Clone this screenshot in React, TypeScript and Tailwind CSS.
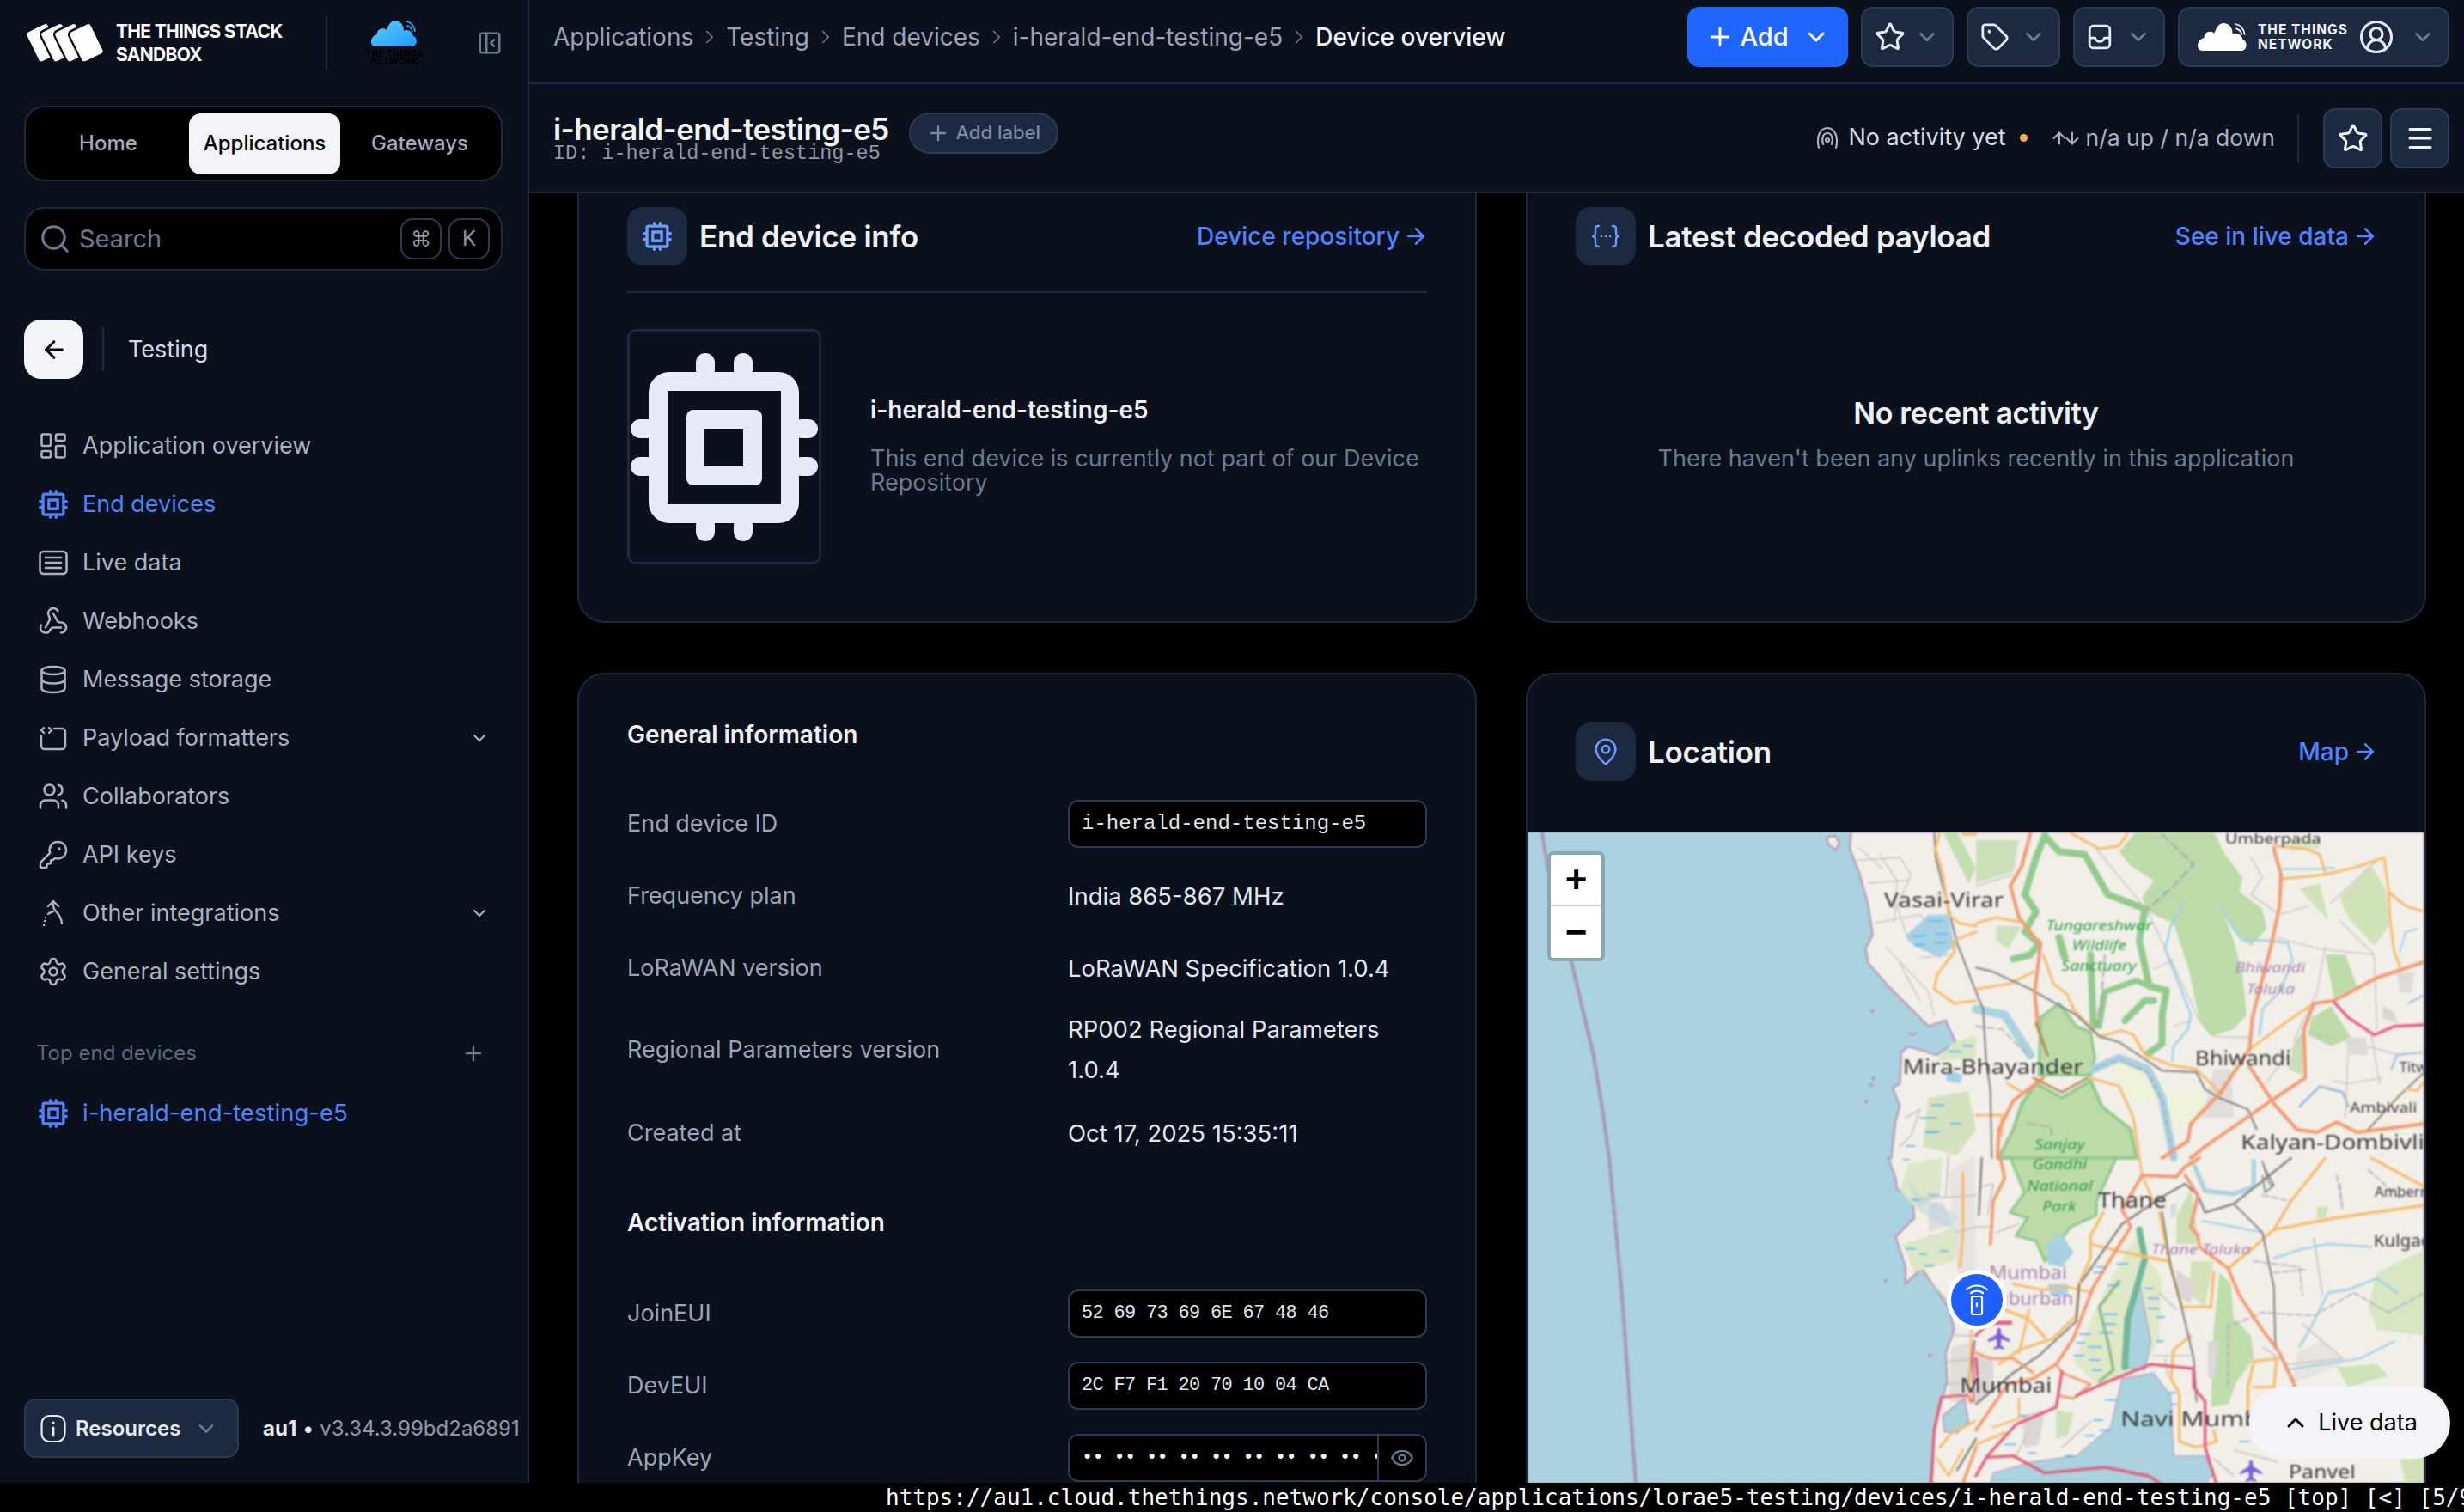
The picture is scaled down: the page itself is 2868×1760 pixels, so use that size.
import {
  ArrowLeft,
  ArrowRight,
  ChevronDown,
  ChevronRight,
  ChevronUp,
  CircleUserRound,
  Database,
  Eye,
  KeyRound,
  LayoutDashboard,
  MapPin,
  Menu,
  PanelLeftClose,
  Plus,
  Search,
  Settings,
  Star,
  Tag,
  Users,
  Webhook,
  ArrowUp,
  ArrowDown,
} from "lucide-react";
import type { ReactNode } from "react";

function Chip({ className }: { className?: string }) {
  return (
    <svg viewBox="0 0 218 219" className={className} fill="currentColor">
      <path
        fillRule="evenodd"
        d="M45 22h127a24 24 0 0 1 24 24v128a24 24 0 0 1-24 24H45a24 24 0 0 1-24-24V46a24 24 0 0 1 24-24ZM43 44v132h132V44ZM73 66h72a8 8 0 0 1 8 8v72a8 8 0 0 1-8 8H73a8 8 0 0 1-8-8V74a8 8 0 0 1 8-8ZM86 88v44h45V88Z"
      />
      <rect x="76" y="0" width="22" height="30" rx="11" />
      <rect x="120" y="0" width="22" height="30" rx="11" />
      <rect x="76" y="190" width="22" height="29" rx="11" />
      <rect x="120" y="190" width="22" height="29" rx="11" />
      <rect x="0" y="77" width="30" height="22" rx="11" />
      <rect x="0" y="121" width="30" height="22" rx="11" />
      <rect x="188" y="77" width="30" height="22" rx="11" />
      <rect x="188" y="121" width="30" height="22" rx="11" />
    </svg>
  );
}

function LiveIcon({ className }: { className?: string }) {
  return (
    <svg viewBox="0 0 34 34" className={className} fill="none" stroke="currentColor" strokeWidth="2.6" strokeLinecap="round">
      <rect x="1.5" y="4" width="31" height="26" rx="4" />
      <path d="M8 11h18M8 17h18M8 23h18" />
    </svg>
  );
}

function PayloadIcon({ className }: { className?: string }) {
  return (
    <svg viewBox="0 0 34 34" className={className} fill="none" stroke="currentColor" strokeWidth="2.4" strokeLinecap="round" strokeLinejoin="round">
      <path d="M3 15v11a4 4 0 0 0 4 4h20a4 4 0 0 0 4-4V10a4 4 0 0 0-4-4h-9" />
      <path d="M6 5 3 8l3 3M12 5l3 3-3 3" />
    </svg>
  );
}

function IntegrationsIcon({ className }: { className?: string }) {
  return (
    <svg viewBox="0 0 34 34" className={className} fill="none" stroke="currentColor" strokeWidth="2.4" strokeLinecap="round" strokeLinejoin="round">
      <path d="M11 9l6-6 6 6" />
      <path d="M17 3v5c0 8 9 8 10 21" />
      <path d="M17 15c-3 1-5 2-6 3" />
      <path d="M6 31h.1M7 26h.1M8 22h.1" />
    </svg>
  );
}

function ActivityIcon({ className }: { className?: string }) {
  return (
    <svg viewBox="0 0 28 30" className={className} fill="none" stroke="currentColor" strokeWidth="2.2" strokeLinecap="round">
      <path d="M4 26C1 14 5 3 14 3s13 11 10 23" />
      <path d="M9 22c-2-7 0-13 5-13s7 6 5 13" />
      <circle cx="14" cy="17" r="2" />
    </svg>
  );
}

function InfoIcon({ className }: { className?: string }) {
  return (
    <svg viewBox="0 0 30 34" className={className} fill="none" stroke="currentColor" strokeWidth="2.2" strokeLinecap="round">
      <rect x="1.5" y="2" width="27" height="30" rx="9" />
      <path d="M15 16v9" strokeWidth="2.8" />
      <path d="M15 10h.1" strokeWidth="3.2" />
    </svg>
  );
}

function TrayIcon({ className }: { className?: string }) {
  return (
    <svg viewBox="0 0 28 28" className={className} fill="none" stroke="currentColor" strokeWidth="2.6" strokeLinecap="round" strokeLinejoin="round">
      <rect x="3" y="2" width="22" height="24" rx="4" />
      <path d="M3 15h6c1 3 3 4 5 4s4-1 5-4h6" />
    </svg>
  );
}

function BracesIcon({ className }: { className?: string }) {
  return (
    <svg viewBox="0 0 34 34" className={className} fill="none" stroke="currentColor" strokeWidth="2.4" strokeLinecap="round" strokeLinejoin="round">
      <path d="M9 5H8a3 3 0 0 0-3 3v5c0 2-1 4-3 4 2 0 3 2 3 4v5a3 3 0 0 0 3 3h1" />
      <path d="M25 5h1a3 3 0 0 1 3 3v5c0 2 1 4 3 4-2 0-3 2-3 4v5a3 3 0 0 1-3 3h-1" />
      <path d="M12 17h.1M17 17h.1M22 17h.1" />
    </svg>
  );
}

function Cloud({ className, id, stops }: { className?: string; id?: string; stops?: [string, string] }) {
  return (
    <svg viewBox="0 0 58 30" className={className} fill={stops ? `url(#${id})` : "currentColor"}>
      {stops && (
        <defs>
          <linearGradient id={id} x1="0" y1="0" x2="1" y2="1">
            <stop offset="0" stopColor={stops[0]} />
            <stop offset="1" stopColor={stops[1]} />
          </linearGradient>
        </defs>
      )}
      <path d="M6 36a6 6 0 0 1 0-1ZM7 36C0 36 0 24 9 22c-1-6 7-9 11-5 2-6 5-11 10-11 6 0 10 5 10 12 2-2 10-1 11 6 5 1 6 12-2 12Z" transform="translate(0 -6)" />
      <path d="M43 1c5 1 9 5 10 11M44 6c3 1 5 3 6 6" fill="none" stroke={stops ? "#33b1ff" : "currentColor"} strokeWidth="1.6" strokeLinecap="round" />
    </svg>
  );
}

function Logo() {
  return (
    <svg viewBox="0 0 93 46" className="w-[93px] h-[46px] shrink-0" fill="#ffffff" stroke="#0a101c" strokeWidth="2.4">
      <rect x="8" y="3" width="29" height="40" rx="4.5" transform="rotate(-26 22 23)" />
      <rect x="25" y="3" width="29" height="40" rx="4.5" transform="rotate(-26 39 23)" />
      <rect x="41" y="3" width="29" height="40" rx="4.5" transform="rotate(-26 55 23)" />
      <rect x="58" y="3" width="29" height="40" rx="4.5" transform="rotate(-26 72 23)" />
    </svg>
  );
}

const navItems = [
  { label: "Application overview", icon: <LayoutDashboard className="w-[36px] h-[36px] -mx-[1px]" strokeWidth={1.7} /> },
  { label: "End devices", icon: <Chip className="w-[34px] h-[34px]" />, active: true },
  { label: "Live data", icon: <LiveIcon className="w-[34px] h-[34px]" /> },
  { label: "Webhooks", icon: <Webhook className="w-[36px] h-[36px] -mx-[1px]" strokeWidth={1.7} /> },
  { label: "Message storage", icon: <Database className="w-[36px] h-[36px] -mx-[1px]" strokeWidth={1.7} /> },
  { label: "Payload formatters", icon: <PayloadIcon className="w-[34px] h-[34px]" />, more: true },
  { label: "Collaborators", icon: <Users className="w-[36px] h-[36px] -mx-[1px]" strokeWidth={1.7} /> },
  { label: "API keys", icon: <KeyRound className="w-[36px] h-[36px] -mx-[1px]" strokeWidth={1.7} /> },
  { label: "Other integrations", icon: <IntegrationsIcon className="w-[34px] h-[34px]" />, more: true },
  { label: "General settings", icon: <Settings className="w-[36px] h-[36px] -mx-[1px]" strokeWidth={1.7} /> },
];

function Sidebar() {
  return (
    <aside className="w-[616px] shrink-0 flex flex-col bg-[#0a101c] border-r-2 border-[#1c2940] pl-[28px] pr-[29px]">
      {/* logo */}
      <div className="h-[100px] flex items-center">
        <Logo />
        <div className="ml-[14px] w-[230px] text-white font-bold text-[21px] leading-[27px] tracking-[-0.7px] whitespace-nowrap">
          <div>THE THINGS STACK</div>
          <div>SANDBOX</div>
        </div>
        <div className="ml-[14px] w-[2px] h-[63px] bg-[#1c2940]" />
        <div className="ml-[49px] w-[58px] flex flex-col items-center">
          <Cloud id="ttn" stops={["#5ccbff", "#1f9bff"]} className="w-[58px] h-[30px]" />
          <div className="text-[10px] leading-[9px] font-bold text-black tracking-[0.6px] text-center whitespace-nowrap mt-[4px]">
            THE THINGS
            <br />
            NETWORK
          </div>
        </div>
        <PanelLeftClose className="ml-auto w-[30px] h-[30px] text-[#6b7a90]" strokeWidth={2} />
      </div>

      {/* tabs */}
      <div className="mt-[23px] h-[88px] bg-black border-2 border-[#1c2940] rounded-[24px] flex items-center px-[8px] text-[24px] font-medium">
        <div className="w-[182px] pr-[6px] text-center text-[#a3adbd]">Home</div>
        <div className="w-[176px] h-[71px] bg-[#f3f4f8] rounded-[14px] flex items-center justify-center text-black">Applications</div>
        <div className="flex-1 pl-[6px] text-center text-[#a3adbd]">Gateways</div>
      </div>

      {/* search */}
      <div className="mt-[30px] h-[74px] bg-black border-2 border-[#1c2940] rounded-[24px] flex items-center pl-[15px] pr-[13px]">
        <Search className="w-[38px] h-[38px] text-[#6b7a90]" strokeWidth={2} />
        <span className="ml-[9px] text-[29px] text-[#6b7a90]">Search</span>
        <div className="ml-auto flex gap-[8px] text-[24px] text-[#8d98a9]">
          <div className="w-[48px] h-[48px] border-2 border-[#2c3b55] rounded-[14px] flex items-center justify-center">⌘</div>
          <div className="w-[48px] h-[48px] border-2 border-[#2c3b55] rounded-[14px] flex items-center justify-center">K</div>
        </div>
      </div>

      {/* app switch */}
      <div className="mt-[57px] flex items-center">
        <div className="w-[69px] h-[69px] bg-[#f3f4f8] rounded-[20px] flex items-center justify-center">
          <ArrowLeft className="w-[32px] h-[32px] text-black" strokeWidth={2.2} />
        </div>
        <div className="ml-[22px] w-[2px] h-[52px] bg-[#1c2940]" />
        <span className="ml-[28px] mt-[2px] text-[27px] text-[#d5dae3]">Testing</span>
      </div>

      {/* nav */}
      <nav className="mt-[44px] pl-[17px] flex flex-col">
        {navItems.map((item) => (
          <div key={item.label} className={`h-[68px] flex items-center ${item.active ? "text-[#4f83ff]" : "text-[#a9b3c2]"}`}>
            {item.icon}
            <span className="ml-[17px] text-[27px]">{item.label}</span>
            {item.more && <ChevronDown className="ml-auto mr-[15px] w-[24px] h-[24px]" strokeWidth={2} />}
          </div>
        ))}
      </nav>

      <div className="mt-[43px] pl-[14px] pr-[20px] flex items-center justify-between text-[#5d6a7e]">
        <span className="text-[24px]">Top end devices</span>
        <Plus className="w-[28px] h-[28px] text-[#6b7a90]" strokeWidth={2} />
      </div>
      <div className="mt-[18px] pl-[17px] h-[68px] flex items-center text-[#4f83ff]">
        <Chip className="w-[34px] h-[34px]" />
        <span className="ml-[17px] text-[27.5px]">i-herald-end-testing-e5</span>
      </div>

      {/* footer */}
      <div className="mt-auto mb-[29px] flex items-center">
        <div className="w-[250px] h-[69px] shrink-0 bg-[#1c2940] border-2 border-[#2c3b55] rounded-[14px] flex items-center pl-[17px] text-[#e6e9f0]">
          <InfoIcon className="w-[30px] h-[34px]" />
          <span className="ml-[11px] text-[24px] font-semibold">Resources</span>
          <ChevronDown className="ml-[16px] w-[28px] h-[28px] text-[#6b7a90]" strokeWidth={2.4} />
        </div>
        <div className="ml-[28px] text-[24px] whitespace-nowrap">
          <span className="font-bold text-[#e6e9f0]">au1</span>
          <span className="text-[#e6e9f0]"> • </span>
          <span className="text-[#8d98a9]">v3.34.3.99bd2a6891</span>
        </div>
      </div>
    </aside>
  );
}

function DropBtn({ children }: { children: ReactNode }) {
  return (
    <div className="h-[70px] bg-[#1c2940] border-2 border-[#2c3b55] rounded-[14px] flex items-center justify-between pl-[14px] pr-[14px] text-[#e6e9f0]">
      {children}
      <ChevronDown className="ml-[10px] w-[30px] h-[30px] shrink-0 text-[#6b7a90]" strokeWidth={2.2} />
    </div>
  );
}

function TopBar() {
  const crumbs = ["Applications", "Testing", "End devices", "i-herald-end-testing-e5"];
  return (
    <header className="h-[98px] shrink-0 bg-[#0a101c] border-b-2 border-[#1c2940] flex items-center pl-[28px] pr-[17px] pb-[10px]">
      <div className="flex items-center text-[28px] text-[#97a3b6]">
        {crumbs.map((c) => (
          <div key={c} className="flex items-center">
            <span>{c}</span>
            <ChevronRight className="mx-[6px] w-[26px] h-[26px] text-[#6b7a90]" strokeWidth={1.6} />
          </div>
        ))}
        <span className="font-medium text-[#f3f4f8]">Device overview</span>
      </div>
      <div className="ml-auto flex items-center gap-[15px]">
        <div className="w-[187px] h-[70px] bg-[#1f66ff] rounded-[14px] flex items-center justify-center text-white text-[29px] font-medium">
          <Plus className="w-[34px] h-[34px]" strokeWidth={2} />
          <span className="ml-[6px]">Add</span>
          <ChevronDown className="ml-[16px] w-[32px] h-[32px]" strokeWidth={2.2} />
        </div>
        <div className="w-[108px]">
          <DropBtn>
            <Star className="w-[36px] h-[36px]" strokeWidth={2} />
          </DropBtn>
        </div>
        <div className="w-[109px]">
          <DropBtn>
            <Tag className="w-[34px] h-[34px]" strokeWidth={2} />
          </DropBtn>
        </div>
        <div className="w-[107px]">
          <DropBtn>
            <TrayIcon className="w-[30px] h-[30px]" />
          </DropBtn>
        </div>
        <div className="w-[316px]">
          <DropBtn>
            <div className="flex items-center pl-[5px]">
              <Cloud className="w-[62px] h-[34px] text-white" />
              <div className="ml-[10px] text-[15.5px] leading-[17px] font-bold text-[#f3f4f8] tracking-[1px] whitespace-nowrap">
                THE THINGS
                <br />
                NETWORK
              </div>
              <CircleUserRound className="ml-[12px] w-[42px] h-[42px]" strokeWidth={1.8} />
            </div>
          </DropBtn>
        </div>
      </div>
    </header>
  );
}

function SubBar() {
  return (
    <div className="h-[127px] shrink-0 bg-[#0a101c] border-b-2 border-[#1c2940] flex items-center pl-[28px] pr-[17px]">
      <div>
        <div className="text-[35px] leading-[36px] font-semibold text-[#f3f4f8] tracking-[-0.6px]">i-herald-end-testing-e5</div>
        <div className="font-['Liberation_Mono',monospace] text-[23.5px] leading-[22px] text-[#8d98a9]">ID: i-herald-end-testing-e5</div>
      </div>
      <div className="ml-[23px] -mt-[12px] w-[174px] h-[48px] rounded-full bg-[#1c2940] border-2 border-[#2c3b55] flex items-center justify-center text-[#7c89a0] text-[22px] font-medium">
        <Plus className="w-[28px] h-[28px]" strokeWidth={2} />
        <span className="ml-[6px]">Add label</span>
      </div>
      <div className="ml-auto flex items-center text-[#a9b3c2]">
        <ActivityIcon className="w-[28px] h-[30px]" />
        <span className="ml-[10px] text-[27px] text-[#d5dae3]">No activity yet</span>
        <span className="ml-[16px] w-[9px] h-[9px] rounded-full bg-[#fbb040]" />
        <span className="ml-[26px] flex items-center">
          <ArrowUp className="w-[22px] h-[32px] -mr-[7px]" strokeWidth={2.2} />
          <ArrowDown className="w-[22px] h-[32px]" strokeWidth={2.2} />
        </span>
        <span className="ml-[5px] text-[26.5px]">n/a up / n/a down</span>
        <span className="ml-[26px] w-[2px] h-[56px] bg-[#1c2940]" />
        <div className="ml-[28px] w-[69px] h-[70px] bg-[#1c2940] border-2 border-[#2c3b55] rounded-[14px] flex items-center justify-center text-[#f3f4f8]">
          <Star className="w-[36px] h-[36px]" strokeWidth={2} />
        </div>
        <div className="ml-[9px] w-[69px] h-[70px] bg-[#1c2940] border-2 border-[#2c3b55] rounded-[14px] flex items-center justify-center text-[#f3f4f8]">
          <Menu className="w-[36px] h-[36px]" strokeWidth={2} />
        </div>
      </div>
    </div>
  );
}

function CardHead({ icon, title, link }: { icon: ReactNode; title: string; link: string }) {
  return (
    <div className="flex items-center">
      <div className="w-[70px] h-[68px] rounded-[18px] bg-[#1c2940] flex items-center justify-center text-[#6d9bff]">{icon}</div>
      <span className="ml-[14px] text-[35px] font-semibold text-[#eef0f6] tracking-[-0.3px]">{title}</span>
      <span className="ml-auto flex items-center text-[28px] font-medium text-[#4f83ff]">
        {link}
        <ArrowRight className="ml-[4px] -mr-[2px] w-[30px] h-[30px]" strokeWidth={2} />
      </span>
    </div>
  );
}

function Row({ label, height, children }: { label: string; height: string; children: ReactNode }) {
  return (
    <div className={`flex items-center ${height}`}>
      <div className="w-[513px] shrink-0 text-[27px] text-[#9aa5b5]">{label}</div>
      <div className="flex-1 text-[27.5px] leading-[47px] text-[#e2e6ee]">{children}</div>
    </div>
  );
}

function MonoBox({ children, eui }: { children: ReactNode; eui?: boolean }) {
  return (
    <div className={`h-[56px] w-[418px] bg-black border-2 border-[#2c3b55] rounded-[12px] flex items-center pl-[14px] font-['Liberation_Mono',monospace] leading-none whitespace-nowrap overflow-hidden ${eui ? "text-[22px] tracking-[-0.7px]" : "text-[24px]"}`}>
      {children}
    </div>
  );
}

const waterDashes = [
  "1400,312,1450,312", "1345,365,1390,365", "1425,358,1465,358", "1350,395,1390,395", "1420,388,1460,388",
  "1470,768,1515,768", "1520,748,1555,748", "1410,955,1455,955", "1370,1000,1430,1000", "1390,1048,1440,1048",
  "1475,1020,1515,1020", "1390,1050,1430,1050", "1320,1098,1355,1098", "1310,1146,1335,1146", "1400,1270,1440,1270",
  "1340,1286,1370,1286", "1320,1457,1355,1457", "1365,1475,1395,1475", "1385,1515,1420,1515", "1440,1465,1470,1465",
];

const q4Dashes = [
  "420,380,450,380", "490,370,530,370", "410,400,440,400", "460,445,500,445", "590,455,620,455", "600,490,640,490",
  "445,545,495,545", "600,525,640,525", "440,580,490,580", "630,555,660,555", "360,615,400,615", "430,610,480,610",
  "350,645,380,645", "390,660,440,660", "340,690,380,690", "395,705,435,705", "405,740,440,740", "630,640,655,640",
  "450,845,490,845", "410,915,445,915", "430,950,470,950", "380,970,415,970", "670,820,700,820", "680,860,700,860",
  "920,990,955,990", "150,900,180,900", "100,1000,140,1000", "180,1030,210,1030", "310,1040,340,1040",
];

function Line({ p, c, w, dash }: { p: string; c: string; w: number; dash?: string }) {
  return <polyline points={p} fill="none" stroke={c} strokeWidth={w} strokeLinecap="round" strokeLinejoin="round" strokeDasharray={dash} />;
}

function Plane({ x, y }: { x: number; y: number }) {
  return (
    <path
      transform={`translate(${x} ${y})`}
      fill="#7b5fd0"
      d="M-5-36h10l3 22 30 18v9L8 2l-2 22 12 9v6L0 34l-18 5v-6l12-9-2-22-30 11v-9l30-18Z"
    />
  );
}

function T({ x, y, s, w, c = "#3a3a3a", i, children, end }: { x: number; y: number; s: number; w?: number; c?: string; i?: boolean; children: string; end?: boolean }) {
  return (
    <text
      x={x}
      y={y}
      fontSize={s}
      fill={c}
      fontStyle={i ? "italic" : "normal"}
      textAnchor={end ? "end" : "start"}
      textLength={w}
      lengthAdjust={w ? "spacingAndGlyphs" : undefined}
      fontFamily="'Noto Sans', sans-serif"
    >
      {children}
    </text>
  );
}

const OR = "#f39a70";
const YL = "#f7bd70";
const PK = "#e4607f";
const GR = "#7f7f7f";
const MN = "#c6c3c2";
const WT = "#aad3df";
const RV = "#a6d2e6";
const FO = "#bddba9";
const EDGE = "#93ca8e";

function MapDrawing() {
  return (
    <svg viewBox="0 0 3132 2277" className="block w-[1044px] h-[759px] blur-[0.8px]" preserveAspectRatio="none">
      <rect width="3132" height="2277" fill={WT} />
      {/* land */}
      <polygon
        points="1130,0 1125,60 1160,150 1190,260 1205,360 1180,410 1190,460 1260,540 1340,620 1400,680 1460,660 1495,735 1430,780 1330,750 1305,770 1300,880 1275,895 1300,960 1285,1010 1270,1140 1260,1140 1285,1210 1290,1250 1345,1270 1350,1350 1285,1415 1320,1520 1320,1580 1375,1525 1470,1660 1490,1740 1460,1820 1465,1920 1445,1990 1420,2100 1405,2277 3132,2277 3132,0"
        fill="#f2efe9"
        stroke="#b79ab8"
        strokeWidth="7"
      />
      <polygon points="1045,20 1075,15 1090,40 1075,65 1050,45" fill="#f2efe9" stroke="#b79ab8" strokeWidth="7" />
      {/* sea boundary */}
      <Line p="50,0 70,120 150,440 230,780 260,960 285,1140 330,1620 350,1900 378,2277" c="#ad9dbf" w={13} />
      <Line p="50,0 70,120 150,440 230,780 260,960 285,1140 330,1620 350,1900 378,2277" c="#9c8bb2" w={4} dash="26 16" />
      {[[1205, 627], [1208, 862], [1200, 885], [1183, 943], [1250, 1568], [1405, 1830]].map(([x, y]) => (
        <circle key={`${x}-${y}`} cx={x} cy={y} r="7" fill="#b79ab8" />
      ))}
      <polyline points="1328,700 1345,712 1358,700" fill="none" stroke="#b79ab8" strokeWidth="6" />

      {/* west side marsh and built up bits */}
      <polygon points="1400,930 1540,905 1566,1040 1500,1130 1380,1100" fill="#c9ddb0" opacity="0.75" />
      <polygon points="1330,1160 1450,1140 1440,1260 1360,1320 1300,1250" fill="#dbe7c6" />
      <polygon points="1310,1440 1500,1380 1490,1500 1350,1540" fill="#dbe7c6" />
      <polygon points="1400,1300 1450,1290 1480,1370 1400,1400" fill="#d8d5d3" opacity="0.7" />
      <polygon points="1470,1190 1560,1130 1566,1560 1500,1540" fill="#d6d3d2" opacity="0.4" />
      <polygon points="1480,1800 1566,1780 1566,2000 1470,1990" fill="#d8d5d3" opacity="0.7" />
      <polygon points="1480,740 1566,710 1566,790 1430,800" fill="#d8e7c4" />
      <polygon points="1320,1200 1360,1260 1500,1340 1480,1390 1370,1330" fill={WT} opacity="0.4" />
      <polygon points="1400,290 1470,290 1490,400 1440,440 1350,400 1320,365" fill={RV} />
      <polygon points="1470,830 1520,850 1510,880 1460,870" fill={RV} />
      <polygon points="1450,2040 1525,1980 1540,2060 1500,2100 1455,2095" fill={WT} stroke="#b79ab8" strokeWidth="5" />
      {["1150,100 1300,90 1340,150 1290,260 1330,380", "1190,180 1330,170", "1210,320 1370,290 1480,400", "1250,400 1400,560 1420,640", "1300,460 1370,590", "1230,80 1290,170 1280,320", "1370,440 1470,430", "1160,60 1240,130"].map((p) => (
        <Line key={p} p={p} c={MN} w={4} />
      ))}
      {["1320,1000 1370,970 1340,1060 1300,1100", "1350,1285 1566,1270", "1470,1130 1460,1280", "1380,1550 1480,1650", "1480,1760 1566,1760", "1470,1850 1566,1840", "1470,1930 1566,1920", "1500,1400 1566,1380"].map((p) => (
        <Line key={p} p={p} c={MN} w={5} />
      ))}
      <Line p="1420,0 1425,90 1450,190 1500,390 1566,560" c={GR} w={6} />
      <Line p="1440,0 1425,60 1450,150 1470,290 1510,320 1566,330" c={YL} w={9} />
      <Line p="1566,350 1490,380 1490,420 1430,500 1420,550 1490,600 1566,590" c={YL} w={9} />
      <Line p="1520,10 1566,10" c={YL} w={9} />
      <Line p="1520,1190 1520,1400 1510,1520" c={YL} w={10} />
      <Line p="1550,1990 1540,1970 1500,1970 1445,1975" c={PK} w={8} />
      <Line p="1445,1975 1420,2090 1410,2277" c={PK} w={10} />
      <Line p="1440,2150 1480,2100 1560,2060" c={YL} w={10} />
      <Line p="1430,2190 1470,2250 1520,2160" c={YL} w={8} />
      <Line p="1560,1780 1540,1920" c={GR} w={8} />
      <Line p="1500,2230 1566,2120" c={GR} w={7} />
      <Line p="1520,2277 1566,2150" c={OR} w={10} />
      <Line p="1550,1730 1540,1990" c={YL} w={7} />
      <Line p="1555,1800 1558,1990" c={PK} w={6} />
      <polygon points="1450,0 1500,0 1566,130 1540,180" fill={FO} opacity="0.9" />
      {waterDashes.map((d) => {
        const [x1, y1, x2, y2] = d.split(",");
        return <line key={d} x1={x1} y1={y1} x2={x2} y2={y2} stroke="#5db0f3" strokeWidth="5" />;
      })}

      {/* east, upper half */}
      <g transform="translate(1566 0)">
        <polygon points="500,70 560,0 830,0 870,80 930,160 920,210 1000,270 1015,340 960,400 900,340 860,270 900,380 930,500 945,640 900,690 820,715 780,660 745,490 690,320 665,310 600,280 580,230 620,170 540,120" fill={FO} />
        <polygon points="0,30 150,30 130,140 0,180" fill={FO} opacity="0.75" />
        <polygon points="70,330 160,330 110,410 70,380" fill={FO} opacity="0.7" />
        <polygon points="1130,200 1200,180 1230,310" fill="#cfe2b8" />
        <polygon points="1270,230 1380,120 1430,200 1440,330 1390,400 1300,300" fill="#cfe2b8" />
        <polygon points="1090,20 1200,30 1200,60 1100,70" fill="#dce7c4" />
        <polygon points="1220,430 1290,430 1330,540 1250,580" fill={FO} />
        <polygon points="1170,650 1240,610 1310,720 1240,750 1160,710" fill={FO} />
        <polygon points="1115,730 1140,700 1140,850 1090,830" fill={FO} opacity="0.8" />
        <polygon points="480,790 620,830 650,920 560,950 470,830" fill="#eef2d8" />
        <polygon points="650,940 790,900 800,990 700,1040" fill="#eef2d8" />
        <polygon points="225,650 290,600 350,680 400,700 415,790 400,850 220,850" fill={FO} stroke={EDGE} strokeWidth="10" />
        <polygon points="210,880 300,930 400,870 440,960 540,1040 560,1140 80,1140 130,1040 160,950" fill={FO} stroke={EDGE} strokeWidth="12" />
        <Line p="240,15 210,90 170,220 210,280 170,350 220,390 190,430 130,445" c={EDGE} w={24} />
        <Line p="240,15 290,70 380,80 460,220 590,270 570,380 605,540 665,555 650,640 650,740 600,775" c={EDGE} w={24} />
        <Line p="290,370 310,440" c={EDGE} w={26} />
        <Line p="400,430 410,680" c={EDGE} w={24} />
        <Line p="430,680 450,560 560,520 605,540" c={EDGE} w={20} />
        <Line p="520,660 590,590 620,590" c={EDGE} w={24} />
        <Line p="650,10 760,115 690,190 590,280" c="#a8a0b0" w={6} dash="30 16" />
        <Line p="450,430 440,560 420,680" c="#a8a0b0" w={5} dash="30 16" />
        <Line p="180,1020 260,1030 265,1060" c="#a8a0b0" w={5} dash="30 12" />
        <Line p="0,620 100,640 190,780" c={WT} w={30} />
        <Line p="0,680 90,690 190,790" c="#b5a8c4" w={5} dash="24 14" />
        <Line p="410,830 500,790 600,830 650,930 690,1140" c={WT} w={28} />
        <Line p="410,830 500,795 600,840 650,940 690,1140" c="#a99dbc" w={4} dash="20 12" />
        <Line p="860,270 900,340 930,380 1020,380 1090,390 1105,450 1060,560 1000,620 990,710" c={RV} w={8} />
        <Line p="725,255 680,330 660,410 700,510 750,640 740,690 690,750 685,800" c={RV} w={8} />
        <Line p="1070,130 1220,130 1250,125" c={RV} w={7} />
        <Line p="1540,340 1500,350 1480,420" c={RV} w={6} />
        <Line p="1130,960 1200,890 1280,910 1300,960" c="#9fb8dd" w={8} />
        <Line p="1450,830 1470,780 1566,770" c="#a6bfe3" w={7} />
        <Line p="1510,600 1566,570" c="#a6bfe3" w={7} />
        {["420,60 600,280 700,490 780,660 830,715 960,720", "1050,370 1200,410 1390,430", "0,190 130,150", "960,90 1000,160 960,220 1060,290 1160,260", "1240,250 1400,100", "1220,400 1190,560 1110,730", "1270,310 1390,430 1400,690", "620,480 690,450", "1010,880 1150,700", "1160,700 1330,740 1480,780", "1300,740 1290,1000", "1380,710 1410,880", "690,680 750,660", "1420,860 1300,880 1250,870"].map((p) => (
          <Line key={p} p={p} c={MN} w={4} />
        ))}
        <polygon points="830,830 890,830 900,1000 790,1000" fill="#dad7d6" opacity="0.8" />
        <polygon points="1290,720 1360,720 1370,780 1300,780" fill="#dddad8" />
        <polygon points="1470,490 1530,490 1520,560 1480,560" fill="#dddad8" />
        <polygon points="1420,610 1460,630 1470,670 1420,650" fill="#d9d6d4" />
        <Line p="0,320 70,300 150,315" c={YL} w={9} />
        <Line p="235,430 270,530 320,570 340,620 430,715 510,695 550,710 590,780 680,815 770,830 860,920" c={YL} w={9} />
        <Line p="955,760 1090,660 1180,600" c={YL} w={9} />
        <Line p="330,5 430,60 500,50 530,5" c={YL} w={9} />
        <Line p="0,550 120,530 200,490" c={YL} w={9} />
        <Line p="400,860 500,890 550,1000 570,1140" c={YL} w={9} />
        <Line p="1070,165 1220,150 1340,120 1425,90 1440,200 1445,300 1460,420 1480,470" c={YL} w={9} />
        <Line p="1040,50 1150,60 1200,80 1220,145" c={YL} w={9} />
        <Line p="1440,210 1500,260 1566,280" c={YL} w={9} />
        <Line p="110,880 160,910" c={YL} w={9} />
        <Line p="0,990 90,990 90,1060" c={YL} w={9} />
        <Line p="0,475 60,490 190,550 350,640 430,715 500,735 650,835 770,840 800,900 850,930 950,970 980,1040" c={GR} w={6} />
        <Line p="0,560 25,620 35,800 50,900 55,1140" c={GR} w={6} />
        <Line p="190,5 160,120 120,190 150,300 225,395 205,560 215,670" c={OR} w={12} />
        <Line p="210,670 250,780" c="#b98a55" w={10} />
        <Line p="235,860 130,940 80,1040 75,1140" c={OR} w={12} />
        <Line p="200,860 300,910 390,860" c="#b98a55" w={8} />
        <Line p="1040,60 1065,150 1060,260 1030,400 980,590 965,650 955,760 855,910 750,1020 740,1080 650,1140" c={OR} w={12} />
        <Line p="955,820 1040,950 1120,1040 1190,1050 1260,1015 1330,1050 1566,1020" c={OR} w={12} />
        <Line p="1566,455 1400,510 1250,590 1180,600 1145,690 1150,860 1030,940 800,1100 750,1140" c={OR} w={12} />
        <Line p="1250,595 1300,650 1390,710 1460,680 1566,675" c={PK} w={10} />
        <Line p="1566,840 1480,920 1370,1040" c="#8a8a6a" w={6} />
        <Line p="1500,900 1540,905 1566,870" c={YL} w={8} />
        <T x={870} y={42} s={50} w={335}>Umberpada</T>
        <T x={245} y={345} s={50} w={370} c="#2e9e47" i>Tungareshwar</T>
        <T x={335} y={415} s={50} w={190} c="#2e9e47" i>Wildlife</T>
        <T x={298} y={487} s={50} w={262} c="#2e9e47" i>Sanctuary</T>
        <T x={905} y={493} s={50} w={245} c="#a884b0" i>Bhiwandi</T>
        <T x={945} y={566} s={50} w={168} c="#a884b0" i>Taluka</T>
        <T x={765} y={815} s={72} w={335}>Bhiwandi</T>
        <T x={1478} y={840} s={50}>Titwala</T>
        <T x={1305} y={980} s={50} w={235}>Ambivali</T>
        <T x={925} y={1110} s={72} w={640}>Kalyan-Dombivli</T>
        <T x={205} y={1110} s={50} w={175} c="#2e9e47" i>Sanjay</T>
      </g>

      {/* east, lower half */}
      <g transform="translate(1566 1140)">
        <polygon points="120,0 490,0 420,150 420,200 330,240 240,360 210,290 140,270 180,210 120,190 170,120" fill={FO} stroke={EDGE} strokeWidth="10" />
        <polygon points="250,300 300,265 340,330 300,380 250,370" fill={RV} />
        <polygon points="250,440 320,440 320,480 260,480" fill={RV} />
        <polygon points="340,710 440,480 570,250 600,350 650,420 640,640 590,720 420,790" fill="#dfe9c8" />
        <polygon points="700,200 750,110 770,240 770,300 700,300" fill="#cfe0b4" />
        <polygon points="750,360 830,360 800,520 750,480" fill="#d3e2ba" />
        <polygon points="850,400 890,440 900,560 960,620 970,700 910,780 880,860 820,870 830,600" fill="#bfdcab" />
        <polygon points="1400,400 1566,320 1566,620 1400,600 1370,520" fill="#cfe2b8" opacity="0.8" />
        <polygon points="1260,730 1400,720 1440,760 1300,800" fill="#cfe2b8" />
        <polygon points="1190,170 1230,170 1220,210 1190,210" fill="#cfe2b8" />
        <polygon points="280,880 340,890 320,970 280,980" fill="#cfe2b8" />
        <polygon points="1480,1050 1566,1000 1566,1140 1500,1140" fill="#cfe2b8" />
        <polygon points="700,390 760,430 750,510 700,480" fill="#dad7d6" />
        <polygon points="810,640 850,640 830,780 810,760" fill="#dad7d6" />
        <polygon points="160,900 240,880 220,1000 170,1010" fill="#dad7d6" />
        <polygon points="0,690 60,690 60,800 0,860" fill="#dad7d6" />
        <polygon points="680,160 700,160 700,200 680,210" fill="#dad7d6" />
        <polygon points="1210,640 1280,720 1100,790 1120,680" fill="#e7e4de" />
        <polygon points="510,730 520,560 570,430 610,640 590,740" fill={WT} stroke="#b4a5bf" strokeWidth="4" />
        <polygon points="50,1140 60,1100 200,1060 350,1040 470,940 510,770 620,750 680,830 690,1040 800,1040 830,1100 800,1140" fill={WT} stroke="#b4a5bf" strokeWidth="4" />
        <Line p="760,20 800,115 900,125 970,100 970,10" c={WT} w={16} />
        <Line p="1000,10 1020,80 1035,100" c={GR} w={5} />
        <Line p="570,250 590,350 530,560 520,730" c="#72b89a" w={22} />
        <Line p="500,430 430,520 460,640 480,740 430,780" c="#8fbb85" w={10} />
        <Line p="1040,350 1130,320 1230,300 1380,310" c={RV} w={8} />
        <Line p="1130,660 1170,590 1230,470 1300,460 1400,420 1470,470" c={RV} w={8} />
        <Line p="1080,740 1340,700 1460,640" c={RV} w={7} />
        <Line p="790,220 900,240 1000,260" c={RV} w={7} />
        {["970,360 1130,380 1140,480", "900,580 1000,540 1180,550 1320,470 1440,540 1566,470", "1260,60 1280,180 1270,90", "1040,400 1150,390", "880,580 880,800", "1370,40 1480,140", "1000,130 1100,150"].map((p) => (
          <Line key={p} p={p} c="#bba9c6" w={5} dash="22 10" />
        ))}
        {["150,230 70,260 120,240", "620,690 750,690", "660,700 670,760", "1090,720 1280,700", "1180,280 1210,480", "180,960 140,1040", "400,920 300,1010", "900,1020 1050,1060", "1140,580 1280,700", "1000,660 1090,720", "830,1050 900,1110", "660,490 640,470 700,530", "20,100 60,90 40,200", "0,240 60,240"].map((p) => (
          <Line key={p} p={p} c={MN} w={5} />
        ))}
        <Line p="400,300 520,330 670,360" c={YL} w={10} />
        <Line p="445,190 400,270 400,350 360,440 350,550 270,630 150,670 80,720" c={YL} w={10} />
        <Line p="100,530 180,560 240,625" c={YL} w={10} />
        <Line p="130,440 230,460 320,450 400,470" c={YL} w={9} />
        <Line p="185,530 170,600 150,680" c={YL} w={9} />
        <Line p="830,400 820,520 720,520 680,380 640,190" c={YL} w={10} />
        <Line p="750,620 690,670 680,770 710,820 710,990 770,1010 840,990 830,950" c={YL} w={10} />
        <Line p="1050,700 970,710 950,800 950,880" c={YL} w={10} />
        <Line p="970,800 1040,800 1050,700" c={YL} w={10} />
        <Line p="1220,0 1100,150 1040,250 960,320 880,385" c={YL} w={10} />
        <Line p="1040,250 1250,210 1566,165" c={YL} w={10} />
        <Line p="1380,0 1566,100" c={YL} w={10} />
        <Line p="0,1000 100,960" c={YL} w={9} />
        <Line p="150,840 150,910 60,940" c={YL} w={8} />
        <Line p="570,0 580,60 620,150" c={YL} w={8} />
        <Line p="20,0 10,200" c={GR} w={7} />
        <Line p="650,190 680,380 720,530 760,700 770,850" c={GR} w={6} />
        <Line p="370,430 510,230 660,130 730,90 775,130 800,190 900,160 1100,0" c={GR} w={7} />
        <Line p="900,160 1000,260 1040,450 1045,650 1110,780" c={GR} w={6} />
        <Line p="360,440 350,570 220,690 130,750 0,860" c={GR} w={7} />
        <polyline points="1005,30 1040,95 1010,120 1000,60" fill="none" stroke={GR} strokeWidth="5" />
        <Line p="85,0 100,70 60,150 50,300" c={OR} w={11} />
        <Line p="580,60 700,65 730,30 780,0" c={OR} w={12} />
        <Line p="580,60 510,180 540,240 410,450 340,630 280,720 200,770 110,790 0,950" c={OR} w={11} />
        <Line p="730,60 775,130 750,240 775,270 780,310 880,385 920,480 1000,600 1060,680 1115,800" c={OR} w={11} />
        <Line p="0,680 50,700 130,700 200,750" c={OR} w={9} />
        <Line p="280,720 300,750 400,790 340,840 290,830" c={OR} w={8} />
        <Line p="300,745 280,870 140,930 40,1040 0,1110" c={PK} w={10} />
        <Line p="350,830 450,785 610,720 760,735 760,800 800,850 800,1010 840,1140" c={PK} w={10} />
        <Line p="40,1045 130,1040 240,1100 450,1080 600,1110 650,1140" c={PK} w={10} />
        <Line p="20,575 120,575" c={PK} w={14} />
        <Line p="0,620 30,590" c={PK} w={10} />
        <Line p="0,700 5,760" c={PK} w={10} />
        {q4Dashes.map((d) => {
          const [x1, y1, x2, y2] = d.split(",");
          return <line key={d} x1={x1} y1={y1} x2={x2} y2={y2} stroke="#5db0f3" strokeWidth="5" />;
        })}
        <Plane x={80} y={630} />
        <Plane x={960} y={1092} />
        <T x={197} y={40} s={50} w={190} c="#2e9e47" i>Gandhi</T>
        <T x={178} y={115} s={50} w={229} c="#2e9e47" i>National</T>
        <T x={232} y={185} s={50} w={118} c="#2e9e47" i>Park</T>
        <T x={425} y={175} s={76} w={240}>Thane</T>
        <T x={612} y={335} s={50} w={348} c="#a884b0" i>Thane Taluka</T>
        <T x={1392} y={135} s={50}>Ambernath</T>
        <T x={1388} y={310} s={62}>Kulgaon</T>
        <T x={45} y={422} s={66} w={273} c="#a884b0">Mumbai</T>
        <T x={340} y={512} s={66} c="#a884b0" end>Suburban</T>
        <T x={-56} y={820} s={72} w={321}>Mumbai</T>
        <T x={505} y={935} s={72} w={560}>Navi Mumbai</T>
        <T x={1092} y={1118} s={66} w={233}>Panvel</T>
      </g>

      {/* labels that cross the east half go last */}
      <T x={1245} y={265} s={68} w={418}>Vasai-Virar</T>
      <T x={1310} y={845} s={72} w={630}>Mira-Bhayander</T>
    </svg>
  );
}

function LocationMap() {
  return (
    <div className="relative flex-1 overflow-hidden">
      <MapDrawing />
      {/* zoom control */}
      <div className="absolute left-[23px] top-[23px] w-[67px] border-4 border-[#8aa6b2] rounded-[7px] bg-white overflow-hidden text-black font-['Liberation_Sans',sans-serif] font-bold">
        <div className="h-[60px] border-b-2 border-[#cccccc] flex items-center justify-center text-[44px] leading-none">+</div>
        <div className="h-[60px] flex items-center justify-center text-[44px] leading-none">−</div>
      </div>
      {/* device marker */}
      <div className="absolute left-[488px] top-[510px] w-[70px] h-[70px] rounded-full bg-[#1f5fff] border-[5px] border-white flex items-center justify-center">
        <svg viewBox="0 0 30 40" className="w-[30px] h-[40px]" fill="none" stroke="white" strokeWidth="2.2" strokeLinecap="round">
          <path d="M3 8c7-6 17-6 24 0M8 12c4-3 10-3 14 0" />
          <rect x="9" y="16" width="12" height="21" rx="2" />
          <path d="M15 24v3" />
        </svg>
      </div>
    </div>
  );
}

export default function App() {
  return (
    <div className="relative w-[2868px] h-[1760px] overflow-hidden bg-black font-['Inter',sans-serif] flex flex-col">
      <div className="flex h-[1726px]">
        <Sidebar />
        <main className="flex-1 min-w-0 flex flex-col">
          <TopBar />
          <SubBar />
          <div className="flex-1 min-h-0 overflow-hidden pl-[56px] pr-[44px]">
            <div className="-mt-[40px] grid grid-cols-[1047px_1048px] gap-x-[57px] gap-y-[58px]">
              {/* end device info */}
              <section className="h-[540px] bg-[#0a101c] border-2 border-[#1c2940] rounded-[32px] pt-[54px] px-[56px]">
                <CardHead icon={<Chip className="w-[34px] h-[34px]" />} title="End device info" link="Device repository" />
                <div className="mt-[30px] h-[2px] bg-[#1c2940]" />
                <div className="mt-[42px] flex items-center">
                  <div className="w-[226px] h-[274px] shrink-0 border-[3px] border-[#1c2940] rounded-[10px] flex items-center justify-center text-[#e8eaf6]">
                    <Chip className="w-[218px] h-[219px]" />
                  </div>
                  <div className="ml-[57px] -mt-[8px]">
                    <div className="text-[28px] font-semibold text-[#eef0f6]">i-herald-end-testing-e5</div>
                    <p className="mt-[22px] text-[27px] leading-[28px] text-[#6b7a90]">This end device is currently not part of our Device Repository</p>
                  </div>
                </div>
              </section>

              {/* latest payload */}
              <section className="h-[540px] bg-[#0a101c] border-2 border-[#1c2940] rounded-[32px] pt-[54px] px-[56px]">
                <CardHead icon={<BracesIcon className="w-[34px] h-[34px]" />} title="Latest decoded payload" link="See in live data" />
                <div className="mt-[146px] text-center">
                  <div className="text-[34px] font-semibold text-[#eef0f6] tracking-[-0.3px]">No recent activity</div>
                  <div className="mt-[8px] text-[27px] text-[#6b7a90]">There haven't been any uplinks recently in this application</div>
                </div>
              </section>

              {/* general information */}
              <section className="h-[1000px] bg-[#0a101c] border-2 border-[#1c2940] rounded-[32px] pt-[50px] pl-[56px] pr-[58px]">
                <h2 className="h-[40px] flex items-center text-[28px] font-semibold text-[#eef0f6]">General information</h2>
                <div className="mt-[42px]">
                  <Row label="End device ID" height="h-[84px]">
                    <MonoBox>i-herald-end-testing-e5</MonoBox>
                  </Row>
                  <Row label="Frequency plan" height="h-[84px]">India 865-867 MHz</Row>
                  <Row label="LoRaWAN version" height="h-[84px]">LoRaWAN Specification 1.0.4</Row>
                  <Row label="Regional Parameters version" height="h-[106px]">
                    RP002 Regional Parameters
                    <br />
                    1.0.4
                  </Row>
                  <Row label="Created at" height="h-[88px]">Oct 17, 2025 15:35:11</Row>
                </div>
                <h2 className="mt-[40px] h-[40px] flex items-center text-[28px] font-semibold text-[#eef0f6]">Activation information</h2>
                <div className="mt-[44px]">
                  <Row label="JoinEUI" height="h-[84px]">
                    <MonoBox eui>52 69 73 69 6E 67 48 46</MonoBox>
                  </Row>
                  <Row label="DevEUI" height="h-[84px]">
                    <MonoBox eui>2C F7 F1 20 70 10 04 CA</MonoBox>
                  </Row>
                  <Row label="AppKey" height="h-[84px]">
                    <div className="h-[56px] w-[418px] bg-black border-2 border-[#2c3b55] rounded-[12px] flex items-center overflow-hidden">
                      <div className="flex-1 min-w-0 pl-[14px] overflow-hidden whitespace-nowrap font-['Liberation_Mono',monospace] text-[22px] tracking-[-0.7px] leading-none text-white">
                        •• •• •• •• •• •• •• •• •• •• ••
                      </div>
                      <div className="w-[56px] h-full border-l-2 border-[#2c3b55] flex items-center justify-center text-[#6b7a90]">
                        <Eye className="w-[28px] h-[28px]" strokeWidth={2} />
                      </div>
                    </div>
                  </Row>
                </div>
              </section>

              {/* location */}
              <section className="h-[1000px] bg-[#0a101c] border-2 border-[#1c2940] rounded-[32px] flex flex-col overflow-hidden">
                <div className="pt-[56px] px-[56px] pb-[59px]">
                  <CardHead icon={<MapPin className="w-[34px] h-[34px]" strokeWidth={1.8} />} title="Location" link="Map" />
                </div>
                <LocationMap />
              </section>
            </div>
          </div>
        </main>
      </div>

      {/* link status line */}
      <div className="h-[34px] shrink-0 bg-black pl-[1031px] font-['DejaVu_Sans_Mono',monospace] text-[26px] leading-[34px] text-white whitespace-nowrap overflow-hidden">
        https://au1.cloud.thethings.network/console/applications/lorae5-testing/devices/i-herald-end-testing-e5 [top] [&lt;] [5/9]
      </div>

      {/* live data pill */}
      <div className="absolute right-[16px] bottom-[62px] w-[234px] h-[84px] rounded-full bg-[#f3f4f8] flex items-center justify-center text-[27px] text-black">
        <ChevronUp className="w-[32px] h-[32px]" strokeWidth={2.2} />
        <span className="ml-[10px]">Live data</span>
      </div>
    </div>
  );
}
